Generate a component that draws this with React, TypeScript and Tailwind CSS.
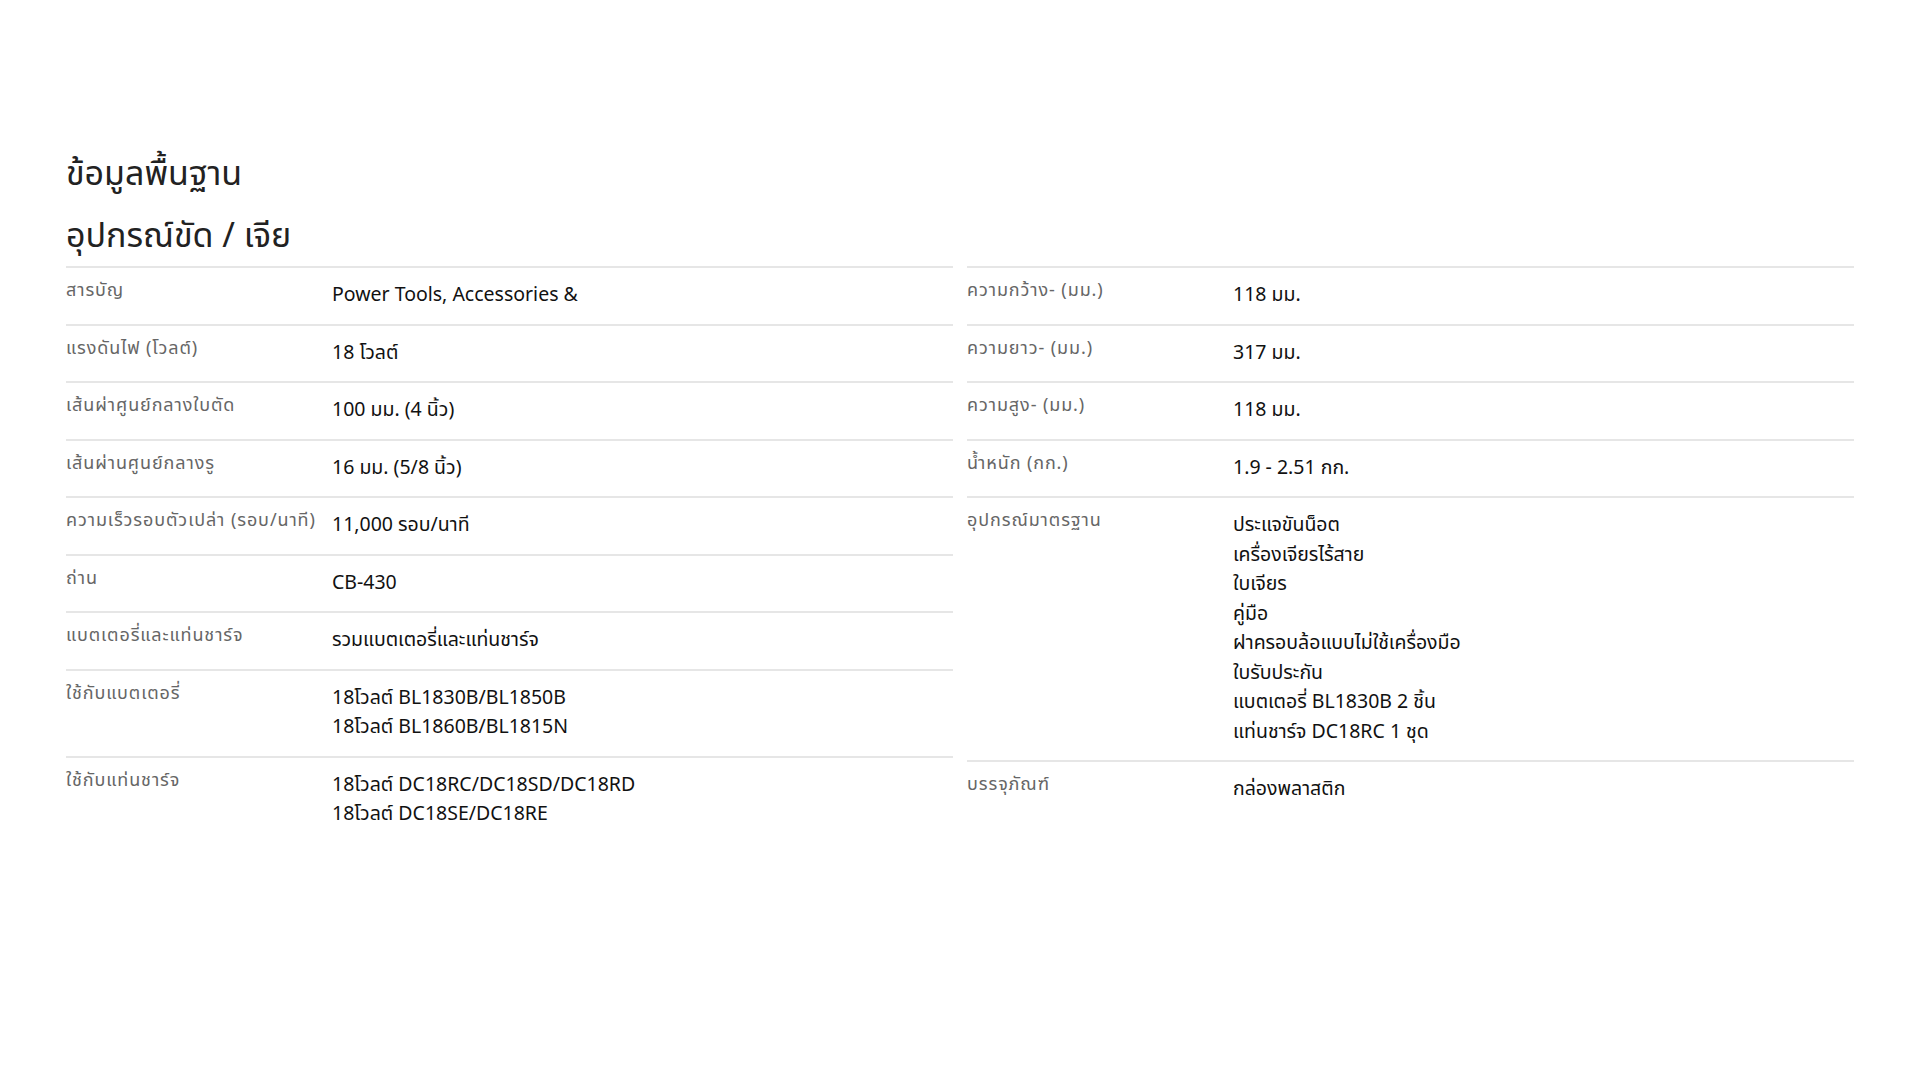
import React from 'react'

type Spec = { label: string; values: string[] }

const leftSpecs: Spec[] = [
  { label: 'สารบัญ', values: ['Power Tools, Accessories &'] },
  { label: 'แรงดันไฟ (โวลต์)', values: ['18 โวลต์'] },
  { label: 'เส้นผ่าศูนย์กลางใบตัด', values: ['100 มม. (4 นิ้ว)'] },
  { label: 'เส้นผ่านศูนย์กลางรู', values: ['16 มม. (5/8 นิ้ว)'] },
  { label: 'ความเร็วรอบตัวเปล่า (รอบ/นาที)', values: ['11,000 รอบ/นาที'] },
  { label: 'ถ่าน', values: ['CB-430'] },
  { label: 'แบตเตอรี่และแท่นชาร์จ', values: ['รวมแบตเตอรี่และแท่นชาร์จ'] },
  { label: 'ใช้กับแบตเตอรี่', values: ['18โวลต์ BL1830B/BL1850B', '18โวลต์ BL1860B/BL1815N'] },
  { label: 'ใช้กับแท่นชาร์จ', values: ['18โวลต์ DC18RC/DC18SD/DC18RD', '18โวลต์ DC18SE/DC18RE'] },
]

const rightSpecs: Spec[] = [
  { label: 'ความกว้าง- (มม.)', values: ['118 มม.'] },
  { label: 'ความยาว- (มม.)', values: ['317 มม.'] },
  { label: 'ความสูง- (มม.)', values: ['118 มม.'] },
  { label: 'น้ำหนัก (กก.)', values: ['1.9 - 2.51 กก.'] },
  {
    label: 'อุปกรณ์มาตรฐาน',
    values: [
      'ประแจขันน็อต',
      'เครื่องเจียรไร้สาย',
      'ใบเจียร',
      'คู่มือ',
      'ฝาครอบล้อแบบไม่ใช้เครื่องมือ',
      'ใบรับประกัน',
      'แบตเตอรี่ BL1830B 2 ชิ้น',
      'แท่นชาร์จ DC18RC 1 ชุด',
    ],
  },
  { label: 'บรรจุภัณฑ์', values: ['กล่องพลาสติก'] },
]

function SpecTable({ specs }: { specs: Spec[] }) {
  return (
    <div className="flex flex-col">
      {specs.map((s) => (
        <div key={s.label} className="flex border-t-2 border-[#e6e6e6] pt-[13px] pb-[13px]">
          <div className="w-[266px] shrink-0 text-[18px] leading-[20px] tracking-[0.9px] text-[#666666]">
            {s.label}
          </div>
          <div className="flex-1 text-[19.5px] leading-[29.5px] text-[#111111]">
            {s.values.map((v) => (
              <div key={v}>{v}</div>
            ))}
          </div>
        </div>
      ))}
    </div>
  )
}

export default function App() {
  return (
    <div className="min-h-screen bg-white px-[66px] pt-[155px] [font-family:'Noto_Sans_Thai','Noto_Sans',sans-serif]">
      <h2 className="text-[34px] leading-[40px] text-[#222222]">ข้อมูลพื้นฐาน</h2>
      <h3 className="mt-[22px] mb-[9px] text-[34px] leading-[40px] text-[#222222]">อุปกรณ์ขัด / เจีย</h3>
      <div className="grid grid-cols-2 gap-x-[14px]">
        <SpecTable specs={leftSpecs} />
        <SpecTable specs={rightSpecs} />
      </div>
    </div>
  )
}
